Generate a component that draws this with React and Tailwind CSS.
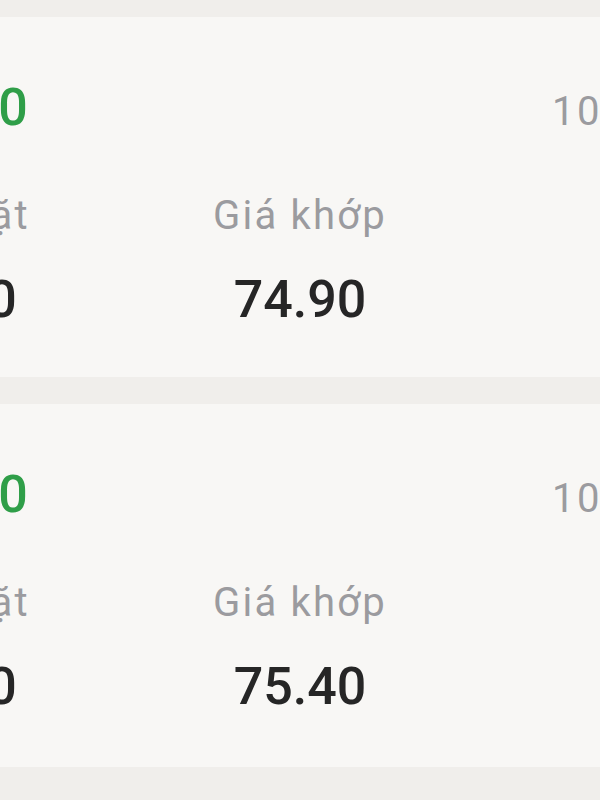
export default function App() {
  const cards = [
    { match: "74.90", h: "h-[360px]" },
    { match: "75.40", h: "h-[363px]" },
  ];
  return (
    <div className="w-[600px] h-[800px] overflow-hidden bg-[#f0eeeb] font-['Roboto',sans-serif]">
      <div className="h-[17px]" />
      {cards.map((c, i) => (
        <div key={i} className={`${c.h} overflow-hidden bg-[#f8f7f5] ${i === 0 ? "mb-[27px]" : ""}`}>
          <div className="w-[900px] -ml-[150px] pt-[65px]">
            <div className="grid grid-cols-3 items-baseline">
              <span className="pl-[48px] text-[52px] leading-[52px] font-medium text-[#2f9e48]">1,000</span>
              <div />
              <span className="pl-[102px] text-[40px] leading-[40px] tracking-[2.4px] text-[#9b9b9f] whitespace-nowrap">10:15:30</span>
            </div>
            <div className="grid grid-cols-3 mt-[62px]">
              <div className="flex flex-col pl-[37px]">
                <span className="text-[40px] leading-[40px] tracking-[2.2px] text-[#9b9b9f] whitespace-nowrap">Giá đặt</span>
                <span className="mt-[38px] text-[52px] leading-[52px] font-medium text-[#262626]">1,000</span>
              </div>
              <div className="flex flex-col items-center">
                <span className="text-[40px] leading-[40px] tracking-[2.2px] text-[#9b9b9f] whitespace-nowrap">Giá khớp</span>
                <span className="mt-[38px] text-[52px] leading-[52px] font-medium text-[#262626]">{c.match}</span>
              </div>
              <div />
            </div>
          </div>
        </div>
      ))}
    </div>
  );
}
